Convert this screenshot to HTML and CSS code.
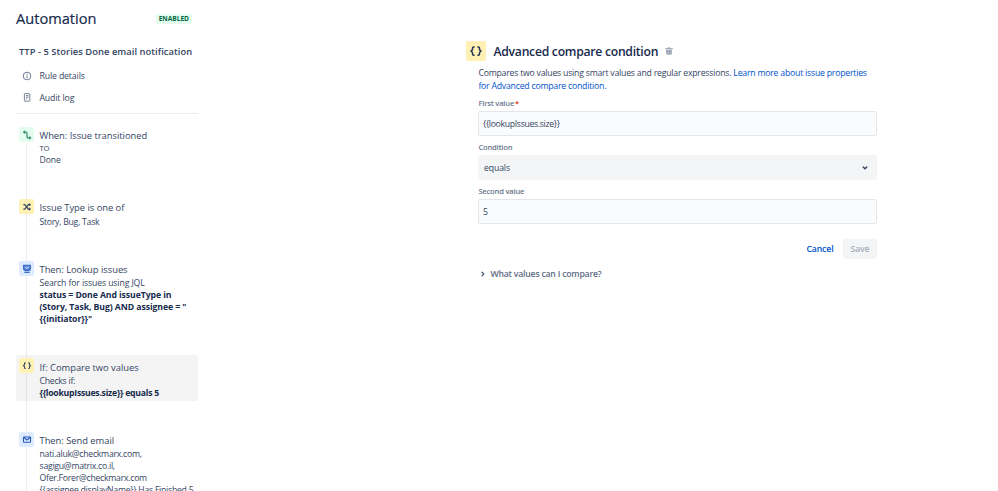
FILE: index.html
```
<!DOCTYPE html>
<html lang="en">
<head>
    <meta charset="UTF-8">
    <meta name="viewport" content="width=device-width, initial-scale=1.0">
    <title>Automation</title>
    <link rel="stylesheet" href="styles.css">
</head>
<body>
<div class="page">
    <aside class="sidebar">
        <div class="heading">
            <h1>Automation</h1>
            <span class="lozenge">ENABLED</span>
        </div>
        <div class="rule-name">TTP - 5 Stories Done email notification</div>
        <nav class="rule-nav">
            <a class="nav-item">
                <svg width="10" height="10" viewBox="0 0 10 10" fill="none" stroke="#5e6c84"><circle cx="5" cy="5" r="3.8" stroke-width=".9"/><path d="M5 4.6v2.4M5 2.8v1"/></svg>
                <span>Rule details</span>
            </a>
            <a class="nav-item">
                <svg width="10" height="10" viewBox="0 0 10 10" fill="none" stroke="#6b778c" stroke-width=".9"><rect x="2.4" y=".6" width="5.4" height="7.6" rx=".6"/><path d="M3.9 2.6h2.6M3.9 4.2h2.6M3.9 5.8h1.2"/></svg>
                <span>Audit log</span>
            </a>
        </nav>

        <div class="steps">
            <div class="step step-trigger">
                <span class="icon green"><svg width="14" height="14" viewBox="0 0 14 14" fill="none" stroke="#2c8a65" stroke-width="1.2"><path d="M4 4.2h2q1 0 1 1v3.7q0 1 1 1h2"/><path d="M4.6 2.7L3 4.2l1.6 1.5zM9.6 8.4l1.6 1.5-1.6 1.5z" fill="#2c8a65" stroke-width=".5"/></svg></span>
                <div class="step-text">
                    <h3>When: Issue transitioned</h3>
                    <p><span class="caps">TO</span><br>Done</p>
                </div>
            </div>
            <div class="step step-type">
                <span class="icon yellow"><svg width="14" height="14" viewBox="0 0 14 14" fill="none" stroke="#344563" stroke-width="1.2"><path d="M3.4 4.7h1.4l3.6 4.4H10M3.4 9.1h1.4l3.6-4.4H10"/><path d="M9.2 3.3l1.7 1.4-1.7 1.4zM9.2 7.7l1.7 1.4-1.7 1.4z" fill="#344563" stroke-width=".3"/></svg></span>
                <div class="step-text">
                    <h3>Issue Type is one of</h3>
                    <p class="tight">Story, Bug, Task</p>
                </div>
            </div>
            <div class="step step-lookup">
                <span class="icon blue"><svg width="14" height="14" viewBox="0 0 14 14" fill="none" stroke="#3568c4" stroke-width="1.1"><path d="M3.6 3.2h6.8v3.6q0 1.6-1.6 1.6H5.2q-1.6 0-1.6-1.6z" fill="#5b87d6"/><path d="M5.4 5.2l1.4 1.4 2-2" stroke="#fff" stroke-width=".9"/><path d="M4.4 10.3h5.2" stroke-width="1.3"/></svg></span>
                <div class="step-text">
                    <h3>Then: Lookup issues</h3>
                    <p>Search for issues using JQL<br><b class="jql">status = Done And issueType in<br>(Story, Task, Bug) AND assignee = "<br>{{initiator}}"</b></p>
                </div>
            </div>
            <div class="step step-compare selected">
                <span class="icon yellow"><svg width="14" height="14" viewBox="0 0 14 14" fill="none" stroke="#344563" stroke-width="1.1"><path d="M5.7 3.9h-.4q-.8 0-.8.8v1l-1 1 1 1v1q0 .8.8.8h.4M8.3 3.9h.4q.8 0 .8.8v1l1 1-1 1v1q0 .8-.8.8h-.4"/></svg></span>
                <div class="step-text">
                    <h3>If: Compare two values</h3>
                    <p class="tight">Checks if:<br><b>{{lookupIssues.size}} equals 5</b></p>
                </div>
            </div>
            <div class="step step-email">
                <span class="icon blue"><svg width="14" height="14" viewBox="0 0 14 14" fill="none" stroke="#2559bd" stroke-width="1.1"><rect x="3.5" y="4" width="7" height="5.2" rx=".5"/><path d="M3.7 4.3L7 7l3.3-2.7"/></svg></span>
                <div class="step-text">
                    <h3>Then: Send email</h3>
                    <p class="tight">nati.aluk@checkmarx.com,<br>sagigu@matrix.co.il,<br>Ofer.Forer@checkmarx.com<br>{{assignee.displayName}} Has Finished 5</p>
                </div>
            </div>
        </div>
    </aside>

    <main class="config">
        <div class="config-title">
            <span class="icon yellow large"><svg width="20" height="20" viewBox="0 0 20 20" fill="none" stroke="#253858" stroke-width="1.5"><path d="M8.6 6h-.9q-1.2 0-1.2 1.2v1.5L5 10.1l1.5 1.4V13q0 1.2 1.2 1.2h.9M11.4 6h.9q1.2 0 1.2 1.2v1.5l1.5 1.4-1.5 1.4V13q0 1.2-1.2 1.2h-.9"/></svg></span>
            <h2>Advanced compare condition</h2>
            <svg class="trash" width="8" height="8" viewBox="0 0 8 8" fill="#a5adba"><path d="M.2 1H3V.3h2V1h2.8v1.1H.2zM.8 2.6h6.4L6.7 7q-.1.8-.8.8H2.1Q1.4 7.8 1.3 7z"/></svg>
        </div>
        <div class="config-body">
            <p class="description">Compares two values using smart values and regular expressions. <a>Learn more about issue properties<br>for Advanced compare condition.</a></p>
            <label>First value<span class="required">*</span></label>
            <div class="textfield">{{lookupIssues.size}}</div>
            <label>Condition</label>
            <div class="select">equals<svg width="8" height="8" viewBox="0 0 8 8" fill="none" stroke="#344563" stroke-width="1.4" stroke-linecap="round"><path d="M2.2 3l1.8 1.8L5.8 3"/></svg></div>
            <label>Second value</label>
            <div class="textfield">5</div>
            <div class="buttons">
                <span class="cancel">Cancel</span>
                <span class="save">Save</span>
            </div>
            <div class="expander"><svg width="8" height="8" viewBox="0 0 8 8" fill="none" stroke="#42526e" stroke-width="1.2" stroke-linecap="round"><path d="M4 2.2L5.8 4 4 5.8"/></svg>What values can I compare?</div>
        </div>
    </main>
</div>
</body>
</html>
```
FILE: styles.css
```
* {
    box-sizing: border-box;
}
body {
    margin: 0;
    background: #fff;
    color: #344563;
    font-family: "Open Sans", "Noto Sans", sans-serif;
    font-size: 8.7px;
    line-height: 12px;
    letter-spacing: -.12px;
}
h1, h2, h3, p {
    margin: 0;
    font-weight: 400;
}
.page {
    display: flex;
    height: 491px;
    overflow: hidden;
    white-space: nowrap;
}
.sidebar {
    width: 198px;
    padding-left: 16px;
}
.heading {
    display: flex;
    justify-content: space-between;
    align-items: center;
    height: 20px;
    margin-top: 9px;
    padding-right: 6px;
}
h1 {
    padding-bottom: 2px;
    color: #172b4d;
    font-size: 14.6px;
    font-weight: 500;
    line-height: 20px;
    letter-spacing: 0;
    -webkit-text-stroke: .2px #172b4d;
}
.lozenge {
    height: 10px;
    padding: 0 3px;
    border-radius: 2px;
    background: #e3fcef;
    color: #006644;
    font-size: 6.6px;
    font-weight: 700;
    line-height: 10px;
    letter-spacing: 0;
}
.rule-name {
    margin: 17px 0 0 3px;
    color: #344563;
    font-size: 9.4px;
    font-weight: 600;
    letter-spacing: .04px;
}
.rule-nav {
    padding: 7px 0 4px;
    border-bottom: 1px solid #ebecf0;
}
.nav-item {
    display: flex;
    align-items: center;
    gap: 8px;
    height: 22px;
    padding-left: 5.5px;
}

/* rule chain */
.steps {
    height: 377px;
    background: linear-gradient(#ebecf0, #ebecf0) 10px 20px / 1px 100% no-repeat;
}
.step {
    display: flex;
    align-items: flex-start;
    gap: 5.5px;
    padding: 3px 0 0 3px;
}
.step h3 {
    padding-top: 2px;
    font-size: 9.4px;
    line-height: 15px;
    letter-spacing: -.03px;
}
.step b {
    color: #172b4d;
    font-weight: 700;
}
.step .jql {
    letter-spacing: -.08px;
}
.step .tight {
    letter-spacing: -.26px;
}
.step-trigger {
    height: 72px;
    margin-top: 10px;
}
.step-trigger h3 {
    line-height: 13px;
}
.step-trigger p {
    margin-top: -.5px;
}
.caps {
    font-size: 7.7px;
}
.step-type {
    height: 62px;
}
.step-type h3, .step-lookup h3 {
    padding: 1px 0;
}
.step-lookup {
    height: 97px;
}
.step-lookup p {
    margin-top: -1px;
}
.step-compare {
    height: 46px;
    margin-bottom: 28px;
    border-radius: 2px;
}
.step-email h3 {
    line-height: 14px;
}
.selected {
    background: rgba(0, 0, 0, .043);
}
.icon {
    display: flex;
    align-items: center;
    justify-content: center;
    flex: none;
    width: 15px;
    height: 15px;
    border-radius: 2px;
}
.green {
    background: #e3fcef;
}
.yellow {
    background: #fff0b3;
}
.blue {
    background: #deebff;
}
.large {
    width: 20px;
    height: 20px;
}

/* component form */
.config {
    width: 411px;
    margin-left: 268px;
    padding-top: 41px;
}
.config-title {
    display: flex;
    align-items: center;
}
h2 {
    margin: 0 7px 0 7.5px;
    padding-top: 1px;
    color: #172b4d;
    font-size: 12.2px;
    font-weight: 600;
    line-height: 19px;
    letter-spacing: -.27px;
}
.config-body {
    padding-left: 12px;
}
.description {
    padding: 6px 0 0 .4px;
    line-height: 12.5px;
    letter-spacing: -.215px;
}
.description a {
    color: #0052cc;
}
label {
    display: block;
    padding: 5px 0 2px .4px;
    color: #6b778c;
    font-size: 7.6px;
    font-weight: 600;
    letter-spacing: -.2px;
}
.required {
    padding-left: 1px;
    color: #de350b;
}
.textfield {
    height: 25px;
    padding: 1px 4px;
    border: 1px solid #e4e6ea;
    border-radius: 2px;
    background: #fafbfc;
    line-height: 23px;
    letter-spacing: -.33px;
}
.select {
    display: flex;
    align-items: center;
    justify-content: space-between;
    height: 25px;
    padding: 0 8px 0 6px;
    border-radius: 2px;
    background: #f4f5f7;
}
.buttons {
    display: flex;
    justify-content: flex-end;
    margin-top: 15px;
    font-weight: 600;
    line-height: 20px;
}
.cancel {
    padding-right: 9.5px;
    color: #0052cc;
}
.save {
    width: 34px;
    border-radius: 2px;
    background: #f4f5f7;
    color: #a5adba;
    text-align: center;
}
.expander {
    display: flex;
    align-items: center;
    gap: 4.5px;
    margin-top: 9px;
    color: #5e6c84;
    font-weight: 600;
    letter-spacing: -.22px;
}
```
